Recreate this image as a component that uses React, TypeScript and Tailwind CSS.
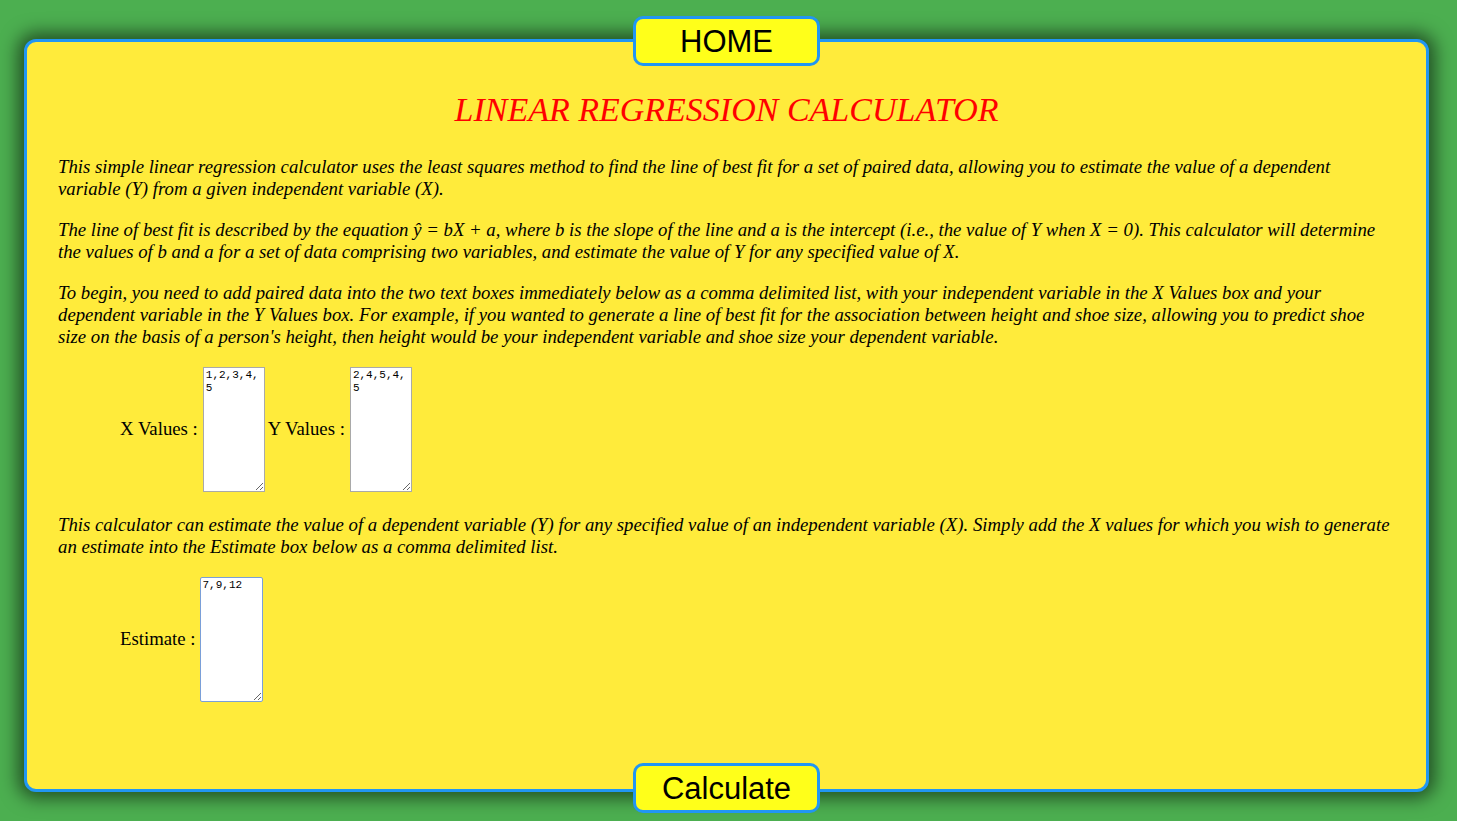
export default function App() {
  const pClass = "italic text-[18.75px] leading-[22px] mb-[19px]";
  const boxClass =
    "h-[125px] w-[62px] resize-y border border-[#a9a9a9] bg-white px-[2px] py-[1px] font-['Liberation_Mono',monospace] text-[11px] leading-[13px] outline-none";

  return (
    <div className="min-h-screen bg-[#4caf50] pt-[39px] px-[24px] pb-[28px] font-['Liberation_Serif',serif] text-black">
      <div className="h-[753px] w-[1405px] rounded-[12px] border-[3px] border-[#2196f3] bg-[#ffeb3b] shadow-[0_0_18px_6px_rgba(0,0,0,0.55)] flex flex-col">
        {/* Home */}
        <div className="flex justify-center -mt-[26px]">
          <button className="h-[50px] w-[187px] rounded-[10px] border-[3px] border-[#2196f3] bg-[#ffff1a] font-['Liberation_Sans',sans-serif] text-[31px] leading-none">
            HOME
          </button>
        </div>

        <div className="flex-1 px-[31px]">
          <h1 className="mt-[26px] mb-[28px] text-center italic text-[34px] leading-[36px] text-[#ff0000]">
            LINEAR REGRESSION CALCULATOR
          </h1>

          <p className={pClass}>
            This simple linear regression calculator uses the least squares method to find the line of best fit for a set of paired data, allowing you to estimate the value of a dependent
            <br />
            variable (Y) from a given independent variable (X).
          </p>
          <p className={pClass}>
            The line of best fit is described by the equation ŷ = bX + a, where b is the slope of the line and a is the intercept (i.e., the value of Y when X = 0). This calculator will determine
            <br />
            the values of b and a for a set of data comprising two variables, and estimate the value of Y for any specified value of X.
          </p>
          <p className={pClass}>
            To begin, you need to add paired data into the two text boxes immediately below as a comma delimited list, with your independent variable in the X Values box and your
            <br />
            dependent variable in the Y Values box. For example, if you wanted to generate a line of best fit for the association between height and shoe size, allowing you to predict shoe
            <br />
            size on the basis of a person's height, then height would be your independent variable and shoe size your dependent variable.
          </p>

          <div className="flex items-center pl-[62px] text-[18.75px] mb-[22px]">
            <span>X Values :</span>
            <textarea defaultValue="1,2,3,4,5" className={"ml-[5px] " + boxClass} />
            <span className="ml-[3px]">Y Values :</span>
            <textarea defaultValue="2,4,5,4,5" className={"ml-[5px] " + boxClass} />
          </div>

          <p className={pClass}>
            This calculator can estimate the value of a dependent variable (Y) for any specified value of an independent variable (X). Simply add the X values for which you wish to generate
            <br />
            an estimate into the Estimate box below as a comma delimited list.
          </p>

          <div className="flex items-center pl-[62px] text-[18.75px]">
            <span>Estimate :</span>
            <textarea
              defaultValue="7,9,12"
              className="ml-[4px] h-[125px] w-[63px] resize-y rounded-[2px] border border-[#7a9fd8] bg-white px-[2px] py-[1px] font-['Liberation_Mono',monospace] text-[11px] leading-[13px] outline-none"
            />
          </div>
        </div>

        {/* Calculate */}
        <div className="flex justify-center -mb-[24px]">
          <button className="h-[50px] w-[187px] rounded-[10px] border-[3px] border-[#2196f3] bg-[#ffff1a] font-['Liberation_Sans',sans-serif] text-[31px] leading-none">
            Calculate
          </button>
        </div>
      </div>
    </div>
  );
}
